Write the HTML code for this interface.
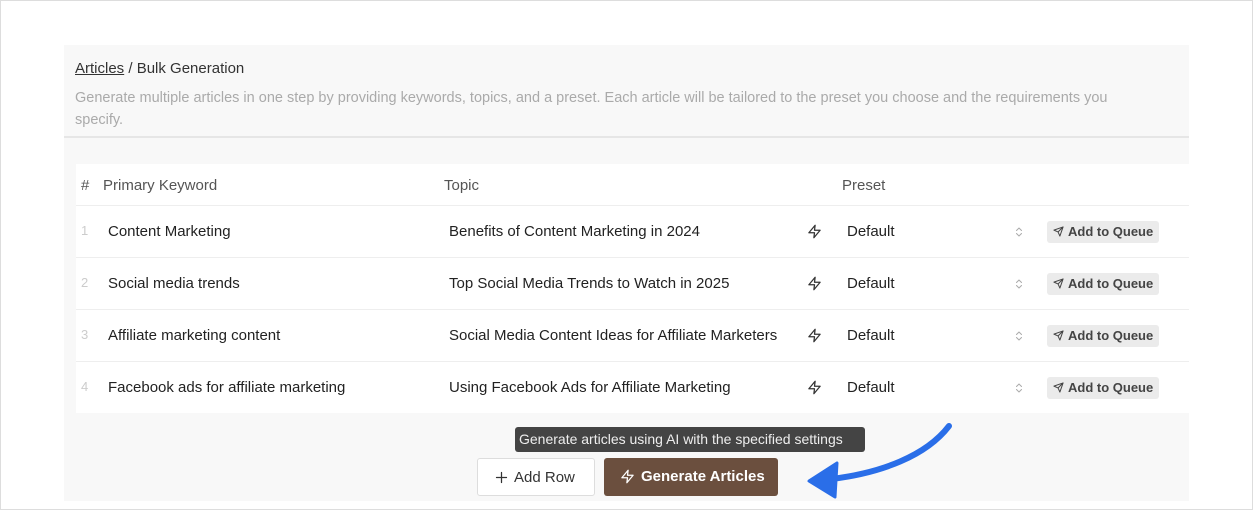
<!DOCTYPE html>
<html><head><style>
*{box-sizing:border-box;margin:0;padding:0}
body{width:1253px;height:510px;background:#fff;font-family:"Liberation Sans",sans-serif;position:relative;overflow:hidden;border:1px solid #ddd}
.panel{position:absolute;left:63px;top:44px;width:1125px;height:456px;background:#f8f8f8}
.bc{position:absolute;left:11px;top:15px;font-size:15px;color:#333}
.desc{position:absolute;left:11px;top:42px;width:1075px;font-size:14.5px;line-height:22px;color:#aaa}
.hr{position:absolute;left:0;top:91px;width:1125px;height:2px;background:#e6e6e6}
.card{position:absolute;left:12px;top:119px;width:1113px;height:249px;background:#fff}
.row{position:absolute;left:0;width:1113px;height:52px;border-top:1px solid #eee;font-size:15px;color:#222}
.row span{position:absolute;top:17px}
.row svg{position:absolute}
.hd{position:absolute;top:13px;font-size:15px;color:#555}
.n{color:#ccc;font-size:13px;left:5px}
.q{position:absolute;left:971px;top:15px;width:112px;height:22px;background:#ebebeb;border-radius:3px;font-size:13px;font-weight:bold;color:#444;padding:3px 0 0 21px}
.q svg{left:6px;top:5px}
.tip{position:absolute;left:451px;top:382px;width:350px;height:25px;background:#444;border-radius:3px;color:#eee;font-size:14px;padding:4px 0 0 4px}
.b1{position:absolute;left:413px;top:413px;width:118px;height:38px;background:#fff;border:1px solid #ddd;border-radius:3px;font-size:15px;color:#333;padding:10px 0 0 36px}
.b2{position:absolute;left:540px;top:413px;width:174px;height:38px;background:#6b4f3e;border-radius:3px;font-size:15px;color:#fff;padding:10px 0 0 37px;font-weight:bold}
.b1 svg,.b2 svg{position:absolute;left:16px;top:11px}
</style></head><body>
<svg width="0" height="0" style="position:absolute"><defs>
<symbol id="z" viewBox="0 0 24 24"><path d="M13 2 3 14h9l-1 8 10-12h-9l1-8z" fill="none" stroke="currentColor" stroke-width="2" stroke-linejoin="round"/></symbol>
<symbol id="c" viewBox="0 0 24 24"><path d="m7 15 5 5 5-5M7 9l5-5 5 5" fill="none" stroke="currentColor" stroke-width="2" stroke-linecap="round" stroke-linejoin="round"/></symbol>
<symbol id="s" viewBox="0 0 24 24"><path d="M22 2 11 13M22 2l-7 20-4-9-9-4 20-7z" fill="none" stroke="currentColor" stroke-width="2.2" stroke-linejoin="round"/></symbol>
</defs></svg>
<div class="panel">
<div class="bc"><u>Articles</u> / Bulk Generation</div>
<div class="desc">Generate multiple articles in one step by providing keywords, topics, and a preset. Each article will be tailored to the preset you choose and the requirements you specify.</div>
<div class="hr"></div>
<div class="card">
<div class="hd" style="left:5px">#</div><div class="hd" style="left:27px">Primary Keyword</div><div class="hd" style="left:368px">Topic</div><div class="hd" style="left:766px">Preset</div>
<div class="row" style="top:41px"><span class="n">1</span><span style="left:32px">Content Marketing</span><span style="left:373px">Benefits of Content Marketing in 2024</span><svg style="left:731px;top:18px;color:#333" width="15" height="15"><use href="#z"/></svg><span style="left:771px">Default</span><svg style="left:937px;top:19px;color:#aaa" width="12" height="14"><use href="#c"/></svg><div class="q"><svg width="11" height="11" style="color:#444"><use href="#s"/></svg>Add to Queue</div></div>
<div class="row" style="top:93px"><span class="n">2</span><span style="left:32px">Social media trends</span><span style="left:373px">Top Social Media Trends to Watch in 2025</span><svg style="left:731px;top:18px;color:#333" width="15" height="15"><use href="#z"/></svg><span style="left:771px">Default</span><svg style="left:937px;top:19px;color:#aaa" width="12" height="14"><use href="#c"/></svg><div class="q"><svg width="11" height="11" style="color:#444"><use href="#s"/></svg>Add to Queue</div></div>
<div class="row" style="top:145px"><span class="n">3</span><span style="left:32px">Affiliate marketing content</span><span style="left:373px">Social Media Content Ideas for Affiliate Marketers</span><svg style="left:731px;top:18px;color:#333" width="15" height="15"><use href="#z"/></svg><span style="left:771px">Default</span><svg style="left:937px;top:19px;color:#aaa" width="12" height="14"><use href="#c"/></svg><div class="q"><svg width="11" height="11" style="color:#444"><use href="#s"/></svg>Add to Queue</div></div>
<div class="row" style="top:197px"><span class="n">4</span><span style="left:32px">Facebook ads for affiliate marketing</span><span style="left:373px">Using Facebook Ads for Affiliate Marketing</span><svg style="left:731px;top:18px;color:#333" width="15" height="15"><use href="#z"/></svg><span style="left:771px">Default</span><svg style="left:937px;top:19px;color:#aaa" width="12" height="14"><use href="#c"/></svg><div class="q"><svg width="11" height="11" style="color:#444"><use href="#s"/></svg>Add to Queue</div></div>
</div>
<div class="tip">Generate articles using AI with the specified settings</div>
<div class="b1"><svg width="15" height="15" viewBox="0 0 24 24"><path d="M12 4v16M4 12h16" stroke="#333" stroke-width="2" stroke-linecap="round"/></svg>Add Row</div>
<div class="b2"><svg width="15" height="15" style="color:#fff"><use href="#z"/></svg>Generate Articles</div>
</div>
<svg style="position:absolute;left:0;top:0" width="1253" height="510">
<path d="M948 425 C925 455 880 472 830 478" stroke="#2a6ee8" stroke-width="6" fill="none" stroke-linecap="round"/>
<path d="M808 480 L836 462 L834 496 Z" fill="#2a6ee8" stroke="#2a6ee8" stroke-width="3" stroke-linejoin="round"/>
</svg>
</body></html>
